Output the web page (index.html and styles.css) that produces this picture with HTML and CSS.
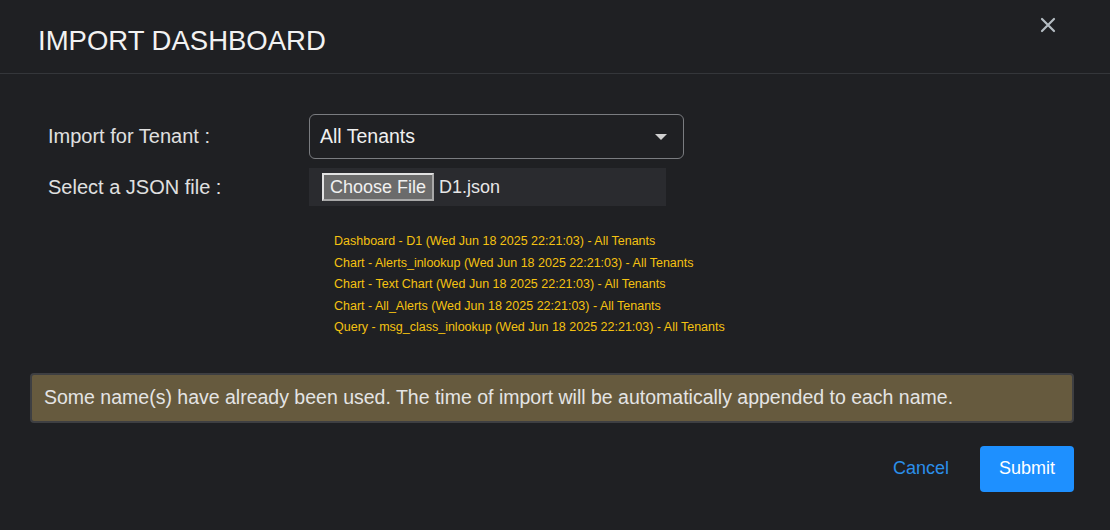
FILE: index.html
```html
<!doctype html>
<html lang="en">
  <head>
    <meta charset="UTF-8" />
    <meta name="viewport" content="width=device-width, initial-scale=1.0" />
    <title>Import Dashboard</title>
    <link rel="stylesheet" href="styles.css">
  </head>
  <body>
    <div class="modal">
      <div class="modal-header">
        <h2>IMPORT DASHBOARD</h2>
        <button class="close" type="button" aria-label="Close">
          <svg width="16" height="16" viewBox="0 0 16 16">
            <path d="M2 2 L14 14 M14 2 L2 14" stroke="#b4bcc2" stroke-width="2.2" stroke-linecap="round" />
          </svg>
        </button>
      </div>

      <div class="modal-body">
        <div class="form-row">
          <label class="label" for="tenant">Import for Tenant :</label>
          <div class="select">
            <span>All Tenants</span>
            <span class="caret"></span>
          </div>
        </div>

        <div class="form-row file-row">
          <label class="label">Select a JSON file :</label>
          <div class="file-input">
            <span class="file-btn">Choose File</span>
            <span class="file-name">D1.json</span>
          </div>
        </div>

        <ul class="conflicts">
          <li>Dashboard - D1 (Wed Jun 18 2025 22:21:03) - All Tenants</li>
          <li>Chart - Alerts_inlookup (Wed Jun 18 2025 22:21:03) - All Tenants</li>
          <li>Chart - Text Chart (Wed Jun 18 2025 22:21:03) - All Tenants</li>
          <li>Chart - All_Alerts (Wed Jun 18 2025 22:21:03) - All Tenants</li>
          <li>Query - msg_class_inlookup (Wed Jun 18 2025 22:21:03) - All Tenants</li>
        </ul>

        <div class="warning">
          Some name(s) have already been used. The time of import will be automatically appended to each name.
        </div>

        <div class="actions">
          <button class="btn-link" type="button">Cancel</button>
          <button class="btn-primary" type="submit">Submit</button>
        </div>
      </div>
    </div>
  </body>
</html>
```

FILE: styles.css
```css
body {
  margin: 0;
  background-color: #1f2023;
  font-family: "Liberation Sans", Arial, sans-serif;
  color: #e6e6e6;
}
.modal {
  width: 1110px;
  height: 530px;
  background-color: #1f2023;
}
.modal-header {
  display: flex;
  justify-content: space-between;
  align-items: flex-start;
  height: 74px;
  border-bottom: 1px solid #34363a;
  padding: 0 54px 0 38px;
  box-sizing: border-box;
}
.modal-header h2 {
  margin: 0;
  padding-top: 25px;
  font-size: 27.5px;
  font-weight: normal;
  color: #f2f2f2;
}
.close {
  background: none;
  border: none;
  padding: 0;
  margin-top: 17px;
  cursor: pointer;
}
.modal-body {
  padding: 40px 36px 0 30px;
}
.form-row {
  display: flex;
  align-items: center;
  margin-bottom: 9px;
}
.label {
  width: 261px;
  padding-left: 18px;
  font-size: 20px;
  color: #e0e0e0;
}
.select {
  width: 375px;
  height: 45px;
  box-sizing: border-box;
  border: 1px solid #7a7c80;
  border-radius: 6px;
  display: flex;
  align-items: center;
  justify-content: space-between;
  padding: 0 16px 0 10px;
  font-size: 19.5px;
  color: #f0f0f0;
}
.caret {
  width: 0;
  height: 0;
  border-left: 6px solid transparent;
  border-right: 6px solid transparent;
  border-top: 6px solid #d0d0d0;
}
.file-input {
  width: 357px;
  height: 38px;
  box-sizing: border-box;
  background-color: #2a2b2f;
  display: flex;
  align-items: center;
  padding-left: 13px;
  font-size: 18px;
}
.file-btn {
  background-color: #6b6b6b;
  border: 2px solid;
  border-color: #e2e2e2 #a8a8a8 #a8a8a8 #e2e2e2;
  color: #f0f0f0;
  padding: 1px 6px;
  font-size: 18px;
  line-height: 22px;
}
.file-name {
  margin-left: 5px;
  color: #e6e6e6;
}
.conflicts {
  list-style: none;
  margin: 25px 0 0 304px;
  padding: 0;
  color: #f5c211;
  font-size: 12.5px;
  line-height: 21.5px;
}
.warning {
  margin-top: 34px;
  height: 50px;
  box-sizing: border-box;
  background-color: #665a3e;
  border: 2px solid #3e3f42;
  border-radius: 4px;
  display: flex;
  align-items: center;
  padding-left: 12px;
  font-size: 19.5px;
  color: #e4e4e4;
}
.actions {
  display: flex;
  justify-content: flex-end;
  align-items: center;
  margin-top: 23px;
}
.btn-link {
  background: none;
  border: none;
  color: #2b8fea;
  font-family: inherit;
  font-size: 18px;
  padding: 0;
  margin-right: 31px;
  cursor: pointer;
}
.btn-primary {
  width: 94px;
  height: 46px;
  background-color: #1e90ff;
  border: none;
  border-radius: 4px;
  color: white;
  font-family: inherit;
  font-size: 18px;
  cursor: pointer;
}
```
